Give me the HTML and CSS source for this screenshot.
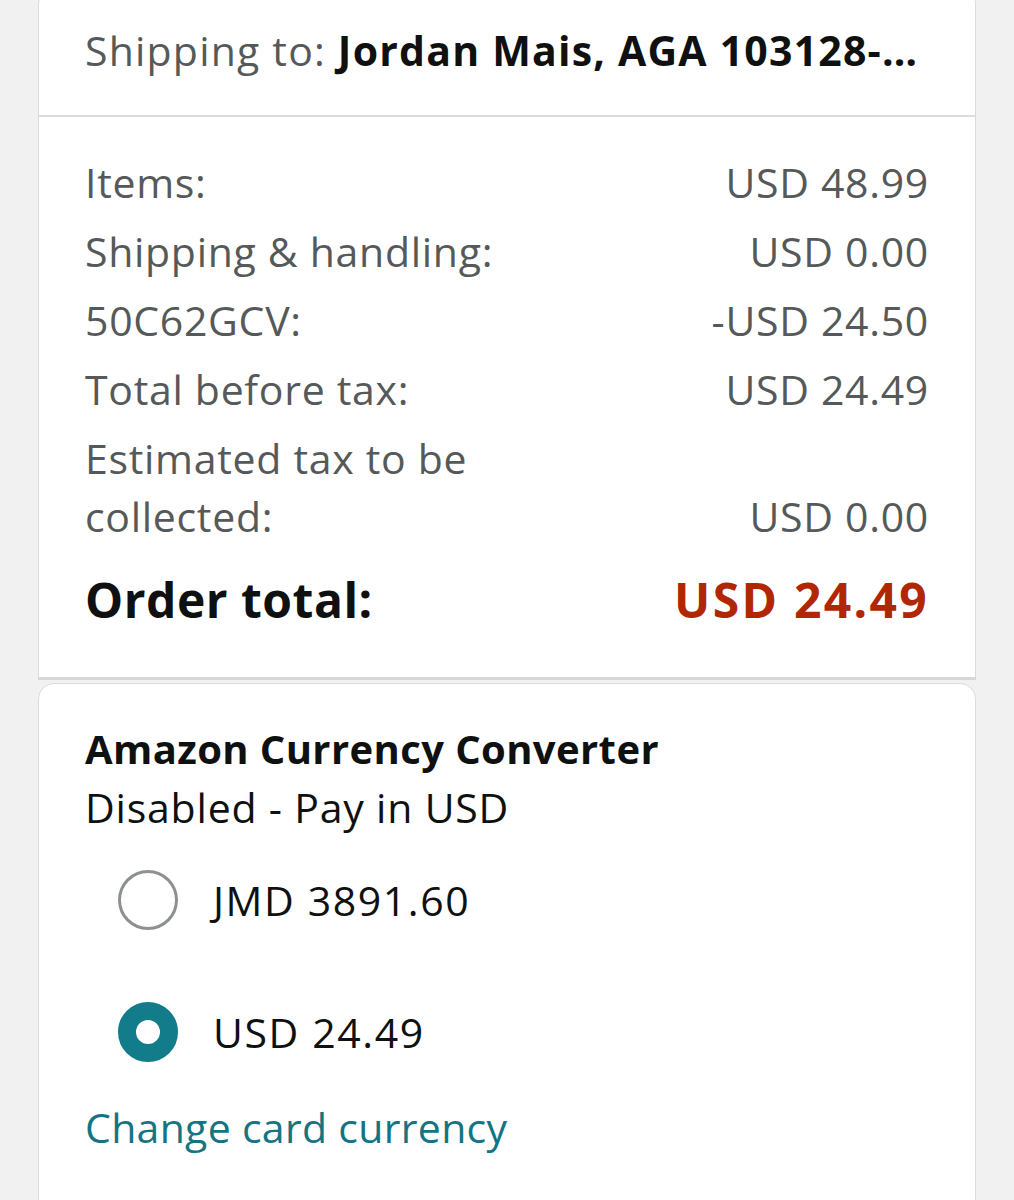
FILE: index.html
```html
<!DOCTYPE html>
<html>
<head>
<meta charset="utf-8">
<link rel="stylesheet" href="styles.css">
</head>
<body>
<div class="page">
  <section class="card summary">
    <div class="ship">
      <span class="muted">Shipping to: </span><span class="strong">Jordan Mais, AGA 103128-…</span>
    </div>
    <div class="rows">
      <div class="row"><span>Items:</span><span>USD 48.99</span></div>
      <div class="row"><span>Shipping &amp; handling:</span><span>USD 0.00</span></div>
      <div class="row"><span>50C62GCV:</span><span>-USD 24.50</span></div>
      <div class="row"><span>Total before tax:</span><span>USD 24.49</span></div>
      <div class="row tax"><span class="taxlabel">Estimated tax to be collected:</span><span>USD 0.00</span></div>
      <div class="row total"><span>Order total:</span><span class="price">USD 24.49</span></div>
    </div>
  </section>
  <section class="card converter">
    <h2 class="title">Amazon Currency Converter</h2>
    <p class="status">Disabled - Pay in USD</p>
    <div class="options">
      <label class="option"><span class="radio"></span><span>JMD 3891.60</span></label>
      <label class="option"><span class="radio checked"></span><span>USD 24.49</span></label>
    </div>
    <a class="link" href="#">Change card currency</a>
  </section>
</div>
</body>
</html>
```
FILE: styles.css
```css
html, body {
  margin: 0;
  padding: 0;
  background: #f1f1f1;
  font-family: "Open Sans", "Noto Sans", sans-serif;
}
.page {
  width: 938px;
  margin: -8px 0 0 38px;
  display: flex;
  flex-direction: column;
  gap: 3px;
}
.card {
  background: #fff;
  border: 1px solid #d9dcdc;
  box-sizing: border-box;
}
.summary {
  border-radius: 12px 12px 0 0;
  border-bottom: 3px solid #d5d9d9;
}
.ship {
  height: 124px;
  box-sizing: border-box;
  padding: 31px 46px 0;
  font-size: 41px;
  letter-spacing: 1.2px;
  line-height: 52px;
  white-space: nowrap;
  border-bottom: 2px solid #dcdede;
}
.muted { color: #565959; }
.strong { color: #0f1111; font-weight: 700; }
.rows {
  padding: 36px 46px 48px;
  display: flex;
  flex-direction: column;
  gap: 11px;
}
.row {
  display: flex;
  justify-content: space-between;
  align-items: flex-end;
  font-size: 41px;
  letter-spacing: 0.7px;
  line-height: 58px;
  color: #565959;
}
.taxlabel { width: 440px; }
.total {
  font-size: 48px;
  letter-spacing: 0.5px;
  font-weight: 700;
  color: #0f1111;
  margin-top: 15px;
}
.total .price { letter-spacing: 2.3px; }
.price { color: #b12704; }
.converter {
  border-radius: 16px 16px 0 0;
  padding: 36px 46px 60px;
  min-height: 540px;
}
.title {
  margin: 0;
  font-size: 40px;
  letter-spacing: 0.4px;
  font-weight: 700;
  color: #0f1111;
  line-height: 58px;
}
.status {
  margin: 0;
  font-size: 41px;
  letter-spacing: 0.8px;
  color: #0f1111;
  line-height: 58px;
}
.options {
  display: flex;
  flex-direction: column;
  gap: 72px;
  padding: 34px 0 0 33px;
}
.option {
  display: flex;
  align-items: center;
  gap: 35px;
  font-size: 41px;
  letter-spacing: 1.6px;
  color: #0f1111;
  height: 60px;
}
.radio {
  width: 60px;
  height: 60px;
  box-sizing: border-box;
  border-radius: 50%;
  border: 3px solid #8d9090;
  background: #fff;
  flex: none;
}
.radio.checked {
  border: 18px solid #137c8b;
}
.link {
  display: block;
  margin-top: 36px;
  font-size: 41px;
  letter-spacing: 0.3px;
  color: #137583;
  text-decoration: none;
  line-height: 58px;
}
```
